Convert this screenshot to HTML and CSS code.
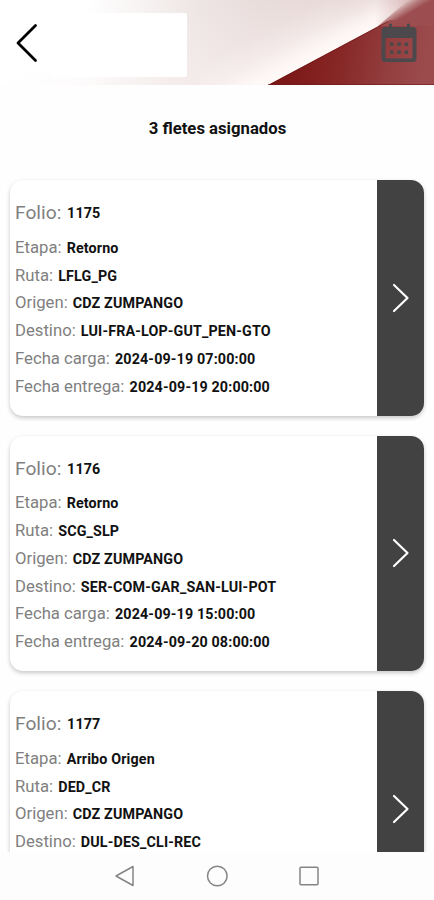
FILE: index.html
```html
<!DOCTYPE html>
<html lang="es">
<head>
<meta charset="utf-8">
<title>Fletes asignados</title>
<link rel="stylesheet" href="styles.css">
</head>
<body>
<header class="topbar">
  <svg class="topbar-art" viewBox="0 0 434 85" preserveAspectRatio="none" aria-hidden="true">
    <defs>
      <linearGradient id="haze" x1="0" x2="1" y1="0" y2="0">
        <stop offset="0.2" stop-color="#fff"/>
        <stop offset="0.34" stop-color="#f6f2f1"/>
        <stop offset="0.46" stop-color="#ede5e4"/>
        <stop offset="0.58" stop-color="#e6dad9"/>
        <stop offset="0.75" stop-color="#dfcecd"/>
        <stop offset="1" stop-color="#c99f9f"/>
      </linearGradient>
      <linearGradient id="fade" x1="200" y1="0" x2="235" y2="85" gradientUnits="userSpaceOnUse">
        <stop offset="0" stop-color="#f8eeee" stop-opacity="0"/>
        <stop offset="1" stop-color="#f8eeee" stop-opacity="0.7"/>
      </linearGradient>
      <linearGradient id="glow" x1="308" y1="8" x2="332" y2="53" gradientUnits="userSpaceOnUse">
        <stop offset="0" stop-color="#fffaf8" stop-opacity="0"/>
        <stop offset="0.45" stop-color="#fffaf8" stop-opacity="0.3"/>
        <stop offset="0.8" stop-color="#fffaf8" stop-opacity="0.85"/>
        <stop offset="1" stop-color="#fffaf8"/>
      </linearGradient>
      <linearGradient id="red" x1="290" y1="55" x2="425" y2="75" gradientUnits="userSpaceOnUse">
        <stop offset="0" stop-color="#7c1818"/>
        <stop offset="0.35" stop-color="#862625"/>
        <stop offset="0.75" stop-color="#944041"/>
        <stop offset="1" stop-color="#9c4b4d"/>
      </linearGradient>
      <linearGradient id="corner" x1="412" y1="-2" x2="418" y2="8.500" gradientUnits="userSpaceOnUse">
        <stop offset="0" stop-color="#a15759" stop-opacity="0"/>
        <stop offset="0.5" stop-color="#a15759" stop-opacity="0.6"/>
        <stop offset="1" stop-color="#9c4d4f"/>
      </linearGradient>
      <linearGradient id="tint" x1="375" x2="425" y1="0" y2="0" gradientUnits="userSpaceOnUse">
        <stop offset="0" stop-color="#c99f9f" stop-opacity="0"/>
        <stop offset="1" stop-color="#c99f9f"/>
      </linearGradient>
    </defs>
    <rect width="434" height="85" fill="url(#haze)"/>
    <rect width="434" height="85" fill="url(#fade)"/>
    <path d="M200 0H434V85H200Z" fill="url(#glow)"/>
    <path d="M375 0H434V28H375Z" fill="url(#tint)"/>
    <path d="M268 85L390 20L434 24V85Z" fill="url(#red)"/>
    <path d="M378 26L408 0H434V26Z" fill="url(#corner)"/>
    <path d="M270 84.500L388 21.500" stroke="#6b1011" stroke-width="1" fill="none" opacity="0.6"/>
    <path d="M268 84.500H434" stroke="#70191a" stroke-width="1" opacity="0.6"/>
  </svg>
  <svg class="back" viewBox="0 0 24 42" aria-hidden="true"><path d="M20.500 3.500L3 21L20.500 38.500"/></svg>
  <div class="name-box"></div>
  <svg class="calendar" viewBox="0 0 36 40" aria-hidden="true">
    <path fill-rule="evenodd" d="M4 4H8V1Q9.500 0 11 1V4H26V1Q27.500 0 29 1V4H32Q35.500 4 35.500 8V35Q35.500 39 32 39H4Q.5 39 .5 35V8Q.5 4 4 4ZM4.500 15V34Q4.500 35.500 6 35.500H30Q31.500 35.500 31.500 34V15Z"/>
    <path d="M9 19.500h3.500v3.500h-3.500zM16.300 19.500h3.500v3.500h-3.500zM23.600 19.500h3.500v3.500h-3.500zM9 27.500h3.500v3.500h-3.500zM16.300 27.500h3.500v3.500h-3.500zM23.600 27.500h3.500v3.500h-3.500z"/>
  </svg>
</header>
<main class="content">
  <h1 class="count">3 fletes asignados</h1>
  <section class="card">
    <div class="info">
      <p class="folio"><span>Folio:</span> <b>1175</b></p>
      <p><span>Etapa:</span> <b>Retorno</b></p>
      <p><span>Ruta:</span> <b>LFLG_PG</b></p>
      <p><span>Origen:</span> <b>CDZ ZUMPANGO</b></p>
      <p><span>Destino:</span> <b>LUI-FRA-LOP-GUT_PEN-GTO</b></p>
      <p><span>Fecha carga:</span> <b>2024-09-19 07:00:00</b></p>
      <p><span>Fecha entrega:</span> <b>2024-09-19 20:00:00</b></p>
    </div>
    <div class="open"><svg viewBox="0 0 18 30" aria-hidden="true"><path d="M2 2L15.500 15L2 28"/></svg></div>
  </section>
  <section class="card">
    <div class="info">
      <p class="folio"><span>Folio:</span> <b>1176</b></p>
      <p><span>Etapa:</span> <b>Retorno</b></p>
      <p><span>Ruta:</span> <b>SCG_SLP</b></p>
      <p><span>Origen:</span> <b>CDZ ZUMPANGO</b></p>
      <p><span>Destino:</span> <b>SER-COM-GAR_SAN-LUI-POT</b></p>
      <p><span>Fecha carga:</span> <b>2024-09-19 15:00:00</b></p>
      <p><span>Fecha entrega:</span> <b>2024-09-20 08:00:00</b></p>
    </div>
    <div class="open"><svg viewBox="0 0 18 30" aria-hidden="true"><path d="M2 2L15.500 15L2 28"/></svg></div>
  </section>
  <section class="card">
    <div class="info">
      <p class="folio"><span>Folio:</span> <b>1177</b></p>
      <p><span>Etapa:</span> <b>Arribo Origen</b></p>
      <p><span>Ruta:</span> <b>DED_CR</b></p>
      <p><span>Origen:</span> <b>CDZ ZUMPANGO</b></p>
      <p><span>Destino:</span> <b>DUL-DES_CLI-REC</b></p>
    </div>
    <div class="open"><svg viewBox="0 0 18 30" aria-hidden="true"><path d="M2 2L15.500 15L2 28"/></svg></div>
  </section>
</main>
<nav class="navbar">
  <svg viewBox="0 0 24 24" aria-hidden="true"><path d="M20 2.500V21.500L3 12Z"/></svg>
  <svg viewBox="0 0 24 24" aria-hidden="true"><circle cx="12.300" cy="12" r="9.800"/></svg>
  <svg viewBox="0 0 24 24" aria-hidden="true"><rect x="3" y="3.300" width="18" height="17.500" rx="1"/></svg>
</nav>
</body>
</html>
```

FILE: styles.css
```css
* {
  box-sizing: border-box;
}

body {
  margin: 0;
  width: 434px;
  height: 900px;
  display: flex;
  flex-direction: column;
  overflow: hidden;
  background: #fefefe;
  font-family: Roboto, "Liberation Sans", sans-serif;
}

.topbar {
  position: relative;
  flex: none;
  height: 85px;
  display: flex;
  align-items: flex-start;
}

.topbar-art {
  position: absolute;
  inset: 0;
  width: 100%;
  height: 100%;
}

.back {
  position: relative;
  width: 24px;
  height: 42px;
  margin: 22px 0 0 15px;
  fill: none;
  stroke: #000;
  stroke-width: 2.8;
  stroke-linecap: round;
  stroke-linejoin: round;
}

.name-box {
  position: relative;
  width: 137px;
  height: 64px;
  margin: 13px 0 0 11px;
  border-radius: 2px;
  background: #fff;
}

.calendar {
  position: relative;
  width: 36px;
  height: 40px;
  margin: 23px 17px 0 auto;
  fill: #4b494b;
}

.content {
  flex: none;
  height: 767px;
  overflow: hidden;
  padding: 0 10px;
}

.count {
  margin: 0;
  height: 95px;
  line-height: 87px;
  padding-left: 1px;
  text-align: center;
  font-size: 16.7px;
  font-weight: 700;
  color: #111;
}

.card {
  display: flex;
  height: 235.5px;
  margin-bottom: 20px;
  border-radius: 13px;
  background: #fff;
  box-shadow: 0 2px 4px rgba(0, 0, 0, 0.22);
}

.info {
  flex: 1;
  padding: 16.2px 0 0 5px;
}

.info p {
  margin: 0;
  height: 27.8px;
  line-height: 27.8px;
  font-size: 16.7px;
  color: #808080;
  white-space: nowrap;
}

.info .folio {
  height: 37.6px;
  line-height: 33px;
  font-size: 19.2px;
}

.info b {
  margin-left: 1px;
  font-size: 14.3px;
  font-weight: 700;
  letter-spacing: 0.14px;
  color: #111;
}

.info .folio b {
  vertical-align: 1px;
}

.open {
  width: 47px;
  display: flex;
  align-items: center;
  justify-content: center;
  border-radius: 0 13px 13px 0;
  background: #424242;
}

.open svg {
  width: 18px;
  height: 30px;
  fill: none;
  stroke: #fff;
  stroke-width: 2.2;
  stroke-linecap: round;
  stroke-linejoin: round;
}

.navbar {
  flex: 1;
  display: flex;
  justify-content: center;
  gap: 68px;
  padding-top: 12px;
  background: #fdfdfd;
}

.navbar svg {
  width: 24px;
  height: 24px;
  fill: none;
  stroke: #858585;
  stroke-width: 1.5;
  stroke-linejoin: round;
}
```
